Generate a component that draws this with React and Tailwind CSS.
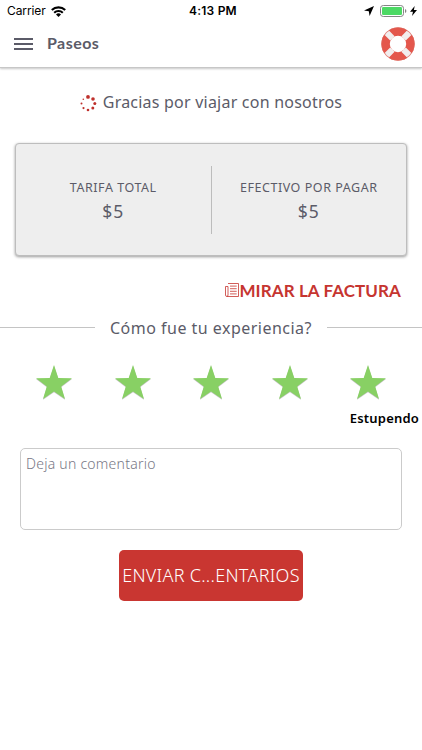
import React from "react";

const STAR = "M18 0 L22.3 13 L36 13.2 L25.2 21.4 L29 34 L18 26.4 L7 34 L10.8 21.4 L0 13.2 L13.7 13 Z";

function StatusBar() {
  return (
    <div className="flex h-[22px] items-center justify-between pr-[5px] pl-[7px] font-['Inter',sans-serif] text-black">
      <div className="flex w-[130px] items-center gap-[5px] text-[12px] leading-[22px]">
        <span className="tracking-[-0.1px]">Carrier</span>
        <svg width="15" height="11" viewBox="0 0 15 11" fill="none" stroke="#000" strokeWidth="2.1">
          <path d="M.8 4.1a9.6 9.6 0 0 1 13.4 0" />
          <path d="M3.2 6.7a6.2 6.2 0 0 1 8.6 0" />
          <path d="M5 8.4a3.7 3.7 0 0 1 5 0L7.5 10.9Z" fill="#000" stroke="none" />
        </svg>
      </div>
      <span className="ml-[2px] text-[12px] leading-[22px] font-semibold tracking-[0.2px]">4:13 PM</span>
      <div className="flex w-[130px] items-center justify-end">
        <svg className="mr-[6px]" width="10" height="10" viewBox="0 0 10 10">
          <path d="M10 0 L5.6 10 L4.8 5.3 L0 4.5Z" />
        </svg>
        <svg width="27" height="12" viewBox="0 0 27 12">
          <rect x=".5" y=".5" width="23" height="11" rx="2.8" fill="#fff" stroke="#858585" />
          <rect x="2" y="2" width="20" height="8" rx="1.3" fill="#4cd964" />
          <path d="M25 4v4q1.4-.7 1.4-2T25 4Z" fill="#858585" />
        </svg>
        <svg className="ml-[3px]" width="7" height="10" viewBox="0 0 7 10">
          <path d="M4.7 0 L0 5.7 H3 L2 10 L7 4.1 H3.9Z" />
        </svg>
      </div>
    </div>
  );
}

function Lifebuoy() {
  return (
    <svg width="34" height="34" viewBox="0 0 34 34" fill="none">
      <circle cx="17" cy="17" r="12.4" stroke="#e4574c" strokeWidth="8.4" />
      <path d="M5.3 5.3 11.4 11.4M28.7 5.3 22.6 11.4M5.3 28.7 11.4 22.6M28.7 28.7 22.6 22.6" stroke="#f2eeee" strokeWidth="6.2" />
      <circle cx="17" cy="17" r="16.4" stroke="#dc6258" strokeWidth=".7" />
    </svg>
  );
}

function Spinner() {
  const dots = [
    [8, 1.9, 1.9], [13, 4, 1.8], [14.8, 8.6, 1.5], [12.8, 13.1, 1.5],
    [8, 15, 1.3], [3.5, 13.1, 1.1], [1.5, 8.6, 1], [3.3, 4.2, 0.8],
  ];
  return (
    <svg width="17" height="17" viewBox="0 0 17 17" fill="#bf302c">
      {dots.map(([x, y, r]) => <circle key={x + "-" + y} cx={x} cy={y} r={r} />)}
    </svg>
  );
}

function Fare({ label }) {
  return (
    <div className="flex flex-1 flex-col items-center pt-[35px]">
      <span className="text-[12.5px] leading-[18px] tracking-[0.55px]">{label}</span>
      <span className="mt-[2px] text-[17.5px] leading-[24px] tracking-[0.9px]">$5</span>
    </div>
  );
}

export default function App() {
  return (
    <div className="h-[750px] w-[422px] overflow-hidden bg-white font-['Noto_Sans',sans-serif] text-[#5b5b68]">
      <header className="h-[68px] border-b border-[#c7c7c7] shadow-[0_1px_2px_rgba(0,0,0,0.22)]">
        <StatusBar />
        <div className="flex h-[45px] items-center pr-[7px] pl-[14px]">
          <div className="mt-[-1px] flex w-[19px] flex-col gap-[3px]">
            <div className="h-[2px] bg-[#5b5b68]" />
            <div className="h-[2px] bg-[#5b5b68]" />
            <div className="h-[2px] bg-[#5b5b68]" />
          </div>
          <h1 className="mt-[-4px] ml-[14px] flex-1 font-['Lato',sans-serif] text-[16px] leading-[22px] font-bold tracking-[0.45px]">Paseos</h1>
          <div className="mt-[-1px]"><Lifebuoy /></div>
        </div>
      </header>

      <div className="flex h-[75px] items-start justify-center pt-[22px]">
        <div className="mt-[5px] mr-[6px]"><Spinner /></div>
        <span className="text-[16px] leading-[24px] tracking-[0.22px]">Gracias por viajar con nosotros</span>
      </div>

      <section className="mx-[15px] flex h-[113px] rounded-[4px] border border-[#bdbdbd] bg-[#eeeeee] shadow-[0_1px_3px_rgba(0,0,0,0.4)]">
        <Fare label="TARIFA TOTAL" />
        <div className="mt-[22px] h-[68px] w-px bg-[#bcbcbc]" />
        <Fare label="EFECTIVO POR PAGAR" />
      </section>

      <div className="mt-[22px] mr-[21px] flex h-[24px] items-center justify-end text-[#c63530]">
        <svg width="14" height="14" viewBox="0 0 14 14" fill="none" stroke="#c63530" strokeWidth=".8">
          <path d="M3 .5h10.5v13H2Q.5 13.5.5 12V3.5H3V12q0 1.5-1.2 1.5M5 3.1h6.7M5 5.7h6.7M5 8.3h6.7M5 10.9h6.7" />
        </svg>
        <span className="pt-px font-['Lato',sans-serif] text-[17px] leading-[24px] font-bold tracking-[0.1px]">MIRAR LA FACTURA</span>
      </div>

      <div className="mt-[13px] flex h-[25px] items-center">
        <div className="h-px w-[95px] bg-[#c4c4c4]" />
        <span className="flex-1 text-center text-[16px] leading-[24px] tracking-[0.48px]">Cómo fue tu experiencia?</span>
        <div className="h-px w-[95px] bg-[#c4c4c4]" />
      </div>

      <div className="mt-[24px] flex justify-between pr-[35px] pl-[35px]">
        {[1, 2, 3, 4, 5].map((n) => (
          <svg key={n} width="38" height="37" viewBox="-1 -1 38 37">
            <path d={STAR} fill="#c5c5c5" transform="translate(0 .8)" />
            <path d={STAR} fill="#88d064" />
          </svg>
        ))}
      </div>

      <div className="mt-[6px] mr-[3px] flex h-[24px] items-center justify-end text-[13px] font-semibold tracking-[0.2px] text-black">Estupendo</div>

      <div className="mt-[17px] mr-[20px] ml-[20px] h-[82px] rounded-[5px] border border-[#cbcbcb] pt-[4px] pl-[5px] text-[14px] leading-[22px] font-light tracking-[0.25px] text-[#777785]">Deja un comentario</div>

      <button className="mt-[20px] ml-[119px] flex h-[51px] w-[184px] items-center justify-center rounded-[5px] bg-[#c93631] text-[18px] font-light tracking-[0.28px] whitespace-nowrap text-white">ENVIAR C...ENTARIOS</button>
    </div>
  );
}
